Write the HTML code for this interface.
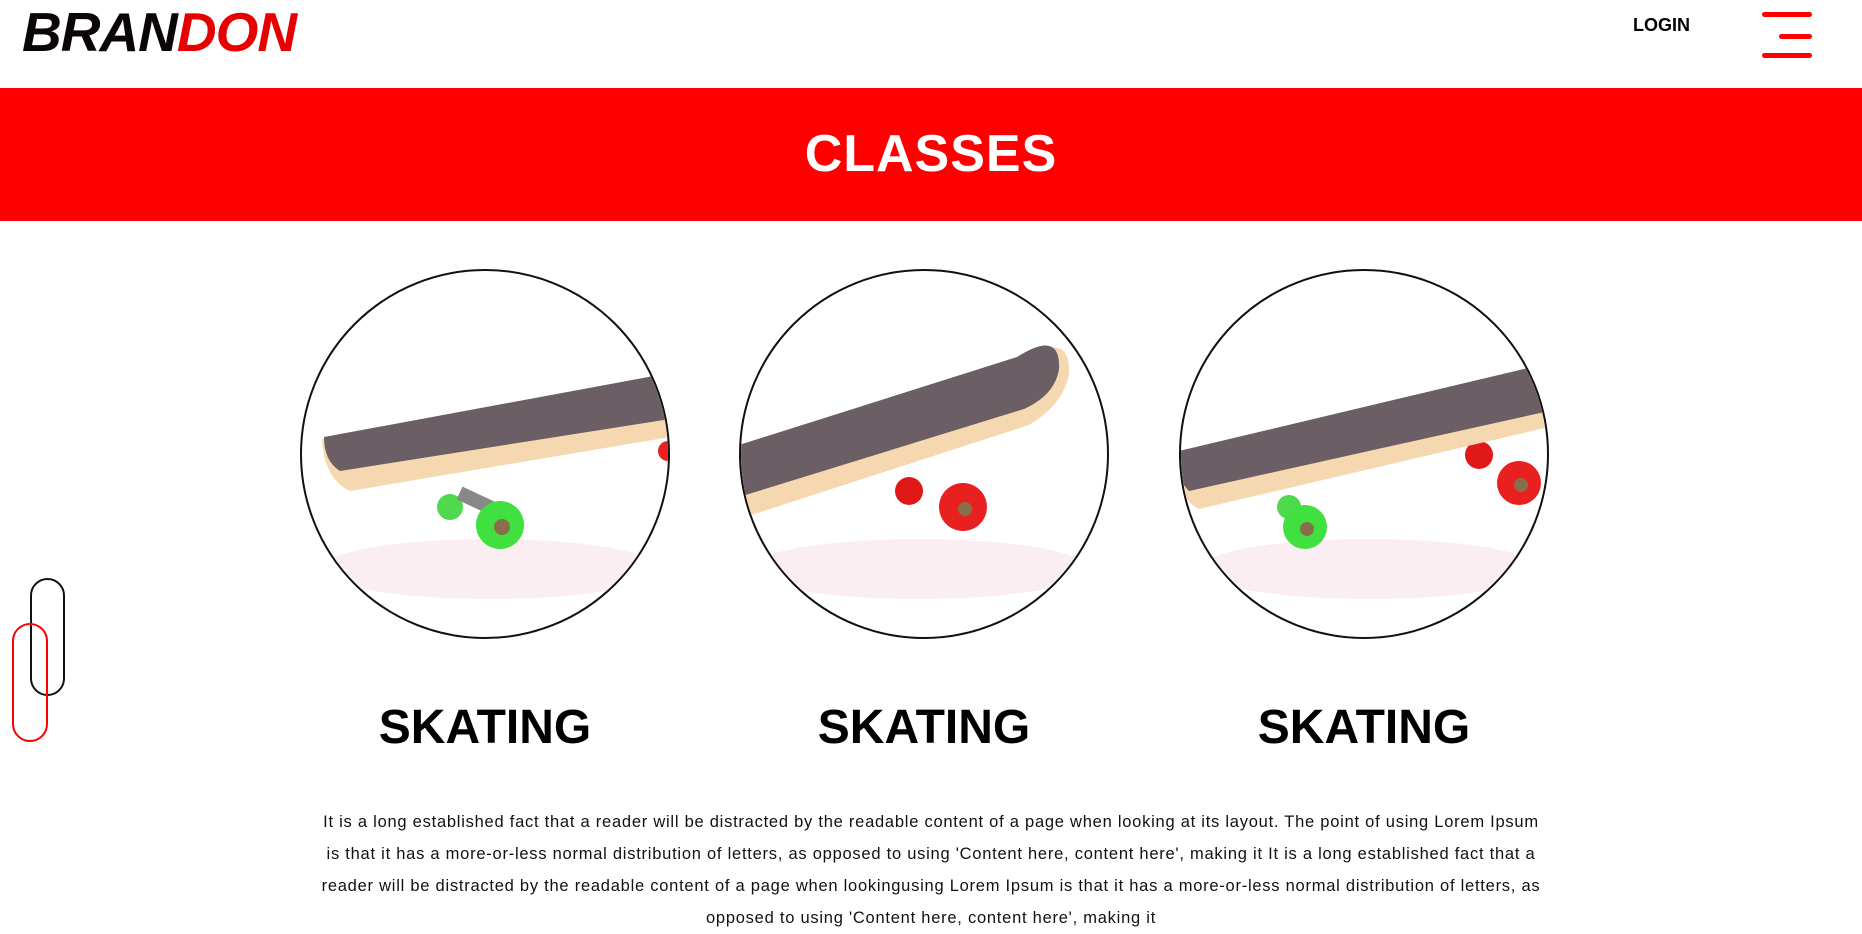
<!DOCTYPE html>
<html><head><meta charset="utf-8"><style>
*{margin:0;padding:0;box-sizing:border-box}
body{width:1862px;height:930px;overflow:hidden;background:#fff;position:relative;font-family:"Liberation Sans",sans-serif}
.logo{position:absolute;left:22px;top:0px;font-size:55px;font-weight:bold;font-style:italic;letter-spacing:-1px;color:#0a0608}
.logo span{color:#e60000}
.login{position:absolute;left:1633px;top:15px;font-size:18px;font-weight:bold;color:#000}
.hb{position:absolute;height:5px;background:#f00;border-radius:3px}
.banner{position:absolute;left:0;top:88px;width:1862px;height:133px;background:#fe0000;text-align:center;color:#fff;font-size:52px;font-weight:bold;line-height:133px;letter-spacing:1px}
.circ{position:absolute;top:269px;width:370px;height:370px;border:2px solid #111;border-radius:50%;overflow:hidden;background:#fff}
.circ svg{position:absolute;left:-2px;top:-2px}
.h{position:absolute;top:700px;width:370px;text-align:center;font-size:48px;font-weight:bold;color:#000}
.p{position:absolute;left:256px;top:806px;width:1350px;text-align:center;font-size:16.5px;letter-spacing:0.75px;line-height:32px;color:#111}
.ov{position:absolute;border-radius:20px;border:2px solid}
</style></head><body>
<div class="logo">BRAN<span>DON</span></div>
<div class="login">LOGIN</div>
<div class="hb" style="left:1762px;top:12px;width:50px"></div>
<div class="hb" style="left:1779px;top:34px;width:33px"></div>
<div class="hb" style="left:1762px;top:53px;width:50px"></div>
<div class="banner">CLASSES</div>

<div class="circ" style="left:300px">
<svg width="370" height="370" viewBox="0 0 370 370">
<ellipse cx="190" cy="300" rx="170" ry="30" fill="#fbeef3"/>
<circle cx="150" cy="238" r="13" fill="#4fd94f"/>
<rect x="158" y="222" width="40" height="14" fill="#888" transform="rotate(25 170 230)"/>
<circle cx="200" cy="256" r="24" fill="#40e040"/><circle cx="202" cy="258" r="8" fill="#8a6d4a"/>
<path d="M22 170 L370 110 L370 168 L50 222 Q24 210 22 170Z" fill="#f5d7b0"/>
<path d="M24 168 L370 104 L370 150 L40 202 Q24 192 24 168Z" fill="#6b5e64"/>
<circle cx="368" cy="182" r="10" fill="#e82020"/>
</svg></div>

<div class="circ" style="left:739px">
<svg width="370" height="370" viewBox="0 0 370 370">
<ellipse cx="180" cy="300" rx="170" ry="30" fill="#fbeef3"/>
<circle cx="170" cy="222" r="14" fill="#e01818"/>
<circle cx="224" cy="238" r="24" fill="#e82020"/><circle cx="226" cy="240" r="7" fill="#8a6d4a"/>
<path d="M0 180 L280 92 Q332 60 330 104 Q326 134 290 156 L0 250Z" fill="#f5d7b0"/>
<path d="M0 176 L278 88 Q322 60 320 100 Q316 126 285 140 L0 228Z" fill="#6b5e64"/>
</svg></div>

<div class="circ" style="left:1179px">
<svg width="370" height="370" viewBox="0 0 370 370">
<ellipse cx="190" cy="300" rx="170" ry="30" fill="#fbeef3"/>
<circle cx="110" cy="238" r="12" fill="#4fd94f"/>
<circle cx="126" cy="258" r="22" fill="#40e040"/><circle cx="128" cy="260" r="7" fill="#8a6d4a"/>
<circle cx="300" cy="186" r="14" fill="#e01818"/>
<circle cx="340" cy="214" r="22" fill="#e82020"/><circle cx="342" cy="216" r="7" fill="#8a6d4a"/>
<path d="M0 184 L370 98 L370 158 L20 240 Q0 230 0 200Z" fill="#f5d7b0"/>
<path d="M0 182 L370 94 L370 142 L10 222 Q0 212 0 200Z" fill="#6b5e64"/>
</svg></div>

<div class="h" style="left:300px">SKATING</div>
<div class="h" style="left:739px">SKATING</div>
<div class="h" style="left:1179px">SKATING</div>

<div class="p">It is a long established fact that a reader will be distracted by the readable content of a page when looking at its layout. The point of using Lorem Ipsum<br>is that it has a more-or-less normal distribution of letters, as opposed to using 'Content here, content here', making it It is a long established fact that a<br>reader will be distracted by the readable content of a page when lookingusing Lorem Ipsum is that it has a more-or-less normal distribution of letters, as<br>opposed to using 'Content here, content here', making it</div>

<div class="ov" style="left:30px;top:578px;width:35px;height:118px;border-color:#111"></div>
<div class="ov" style="left:12px;top:623px;width:36px;height:119px;border-color:#f00"></div>
</body></html>
